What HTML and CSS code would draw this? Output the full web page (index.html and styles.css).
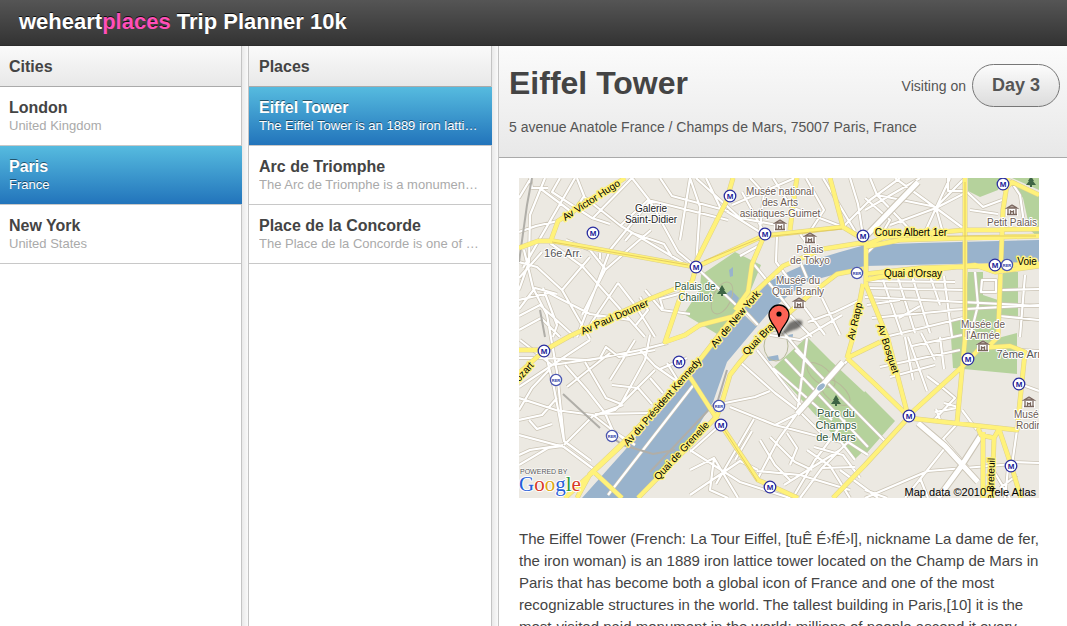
FILE: index.html
```html
<!DOCTYPE html>
<html lang="en">
<head>
<meta charset="utf-8">
<title>weheartplaces Trip Planner 10k</title>
<link rel="stylesheet" href="styles.css">
</head>
<body>
<header class="topbar"><h1 class="brand">weheart<span class="brand-accent">places</span> Trip Planner 10k</h1></header>
<main class="columns">
  <nav class="pane" aria-labelledby="cities-title">
    <h2 class="pane-title" id="cities-title">Cities</h2>
    <ul class="list">
      <li><a class="item" href="#london"><strong class="item-name">London</strong><span class="item-note">United Kingdom</span></a></li>
      <li><a class="item selected" href="#paris" aria-current="true"><strong class="item-name">Paris</strong><span class="item-note">France</span></a></li>
      <li><a class="item" href="#new-york"><strong class="item-name">New York</strong><span class="item-note">United States</span></a></li>
    </ul>
  </nav>
  <div class="splitter"></div>
  <nav class="pane pane-places" aria-labelledby="places-title">
    <h2 class="pane-title" id="places-title">Places</h2>
    <ul class="list">
      <li><a class="item selected" href="#eiffel" aria-current="true"><strong class="item-name">Eiffel Tower</strong><span class="item-note">The Eiffel Tower is an 1889 iron lattice tower located on the Champ de Mars</span></a></li>
      <li><a class="item" href="#arc"><strong class="item-name">Arc de Triomphe</strong><span class="item-note">The Arc de Triomphe is a monument in Paris</span></a></li>
      <li><a class="item" href="#concorde"><strong class="item-name">Place de la Concorde</strong><span class="item-note">The Place de la Concorde is one of the major public squares in Paris</span></a></li>
    </ul>
  </nav>
  <div class="splitter"></div>
  <article class="detail">
    <header class="detail-head">
      <div class="detail-row">
        <h2 class="detail-title">Eiffel Tower</h2>
        <div class="visit"><span>Visiting on</span><button class="day" type="button">Day 3</button></div>
      </div>
      <p class="address">5 avenue Anatole France / Champs de Mars, 75007 Paris, France</p>
    </header>
    <div class="detail-body">
      <svg class="map" viewBox="519 178 520 320" role="img" aria-label="Map around the Eiffel Tower">
        <defs>
          <filter id="soft" x="-50%" y="-50%" width="200%" height="200%"><feGaussianBlur stdDeviation="1"/></filter>
          <g id="m"><circle r="5.8" fill="#fff" stroke="#2a2ea0" stroke-width="1.3"/><text class="metro" y="3">M</text></g>
          <g id="r"><circle r="5.6" fill="#fff" stroke="#4a55b0" stroke-width="1.3"/><text class="rer" y="1.600">RER</text></g>
          <g id="museum"><path d="M-6-2 0-6 6-2V6H-6Z" fill="#fff"/><path d="M-5-2 0-5 5-2Z" fill="#b9aca4"/><path d="M-5-2 0-5 5-2ZM-4-1V4M4-1V4M-5 4.500H5M-1.500 4V1L0 2 1.500 1V4" fill="none" stroke="#79665d" stroke-width="1.3"/></g>
          <g id="tree"><path d="M0-6 3-1H2L5 3H1V5H-1V3H-5L-2-1H-3Z" fill="#3f6545"/></g>
          <path id="streets" d="M519 198 531 178M519 290 529 262 530 215 545 178M524 250 533 288 547 315 557 372 564 440M519 262 537 267 562 290 590 339M541 189 573 213M519 278 542 252M550 243 582 266 645 337M523 268 575 178M558 221 536 226 519 232M560 178 552 192 592 218 610 224M592 219 632 178M577 178 584 196 570 218M583 196 621 226 690 267M530 178 532 188 548 188M632 178 650 201 678 252 696 267M650 201 610 250 577 337M651 230 605 270 582 315M606 270 590 250 566 240M620 226 648 200 728 220M690 178 700 207 696 267M660 178 672 196 728 211M625 241 632 233 664 244 672 257M519 316 540 305 575 337M519 330 541 318 560 337M519 300 549 293 590 314 630 320M562 290 590 257M590 325 618 283M618 283 635 305 655 337M645 290 662 310 690 314M640 297 648 310 636 325M519 309 535 288 557 294M663 309 660 299 686 292M600 259 600 253M543 288 557 325 553 337M680 240 690 178M696 178 740 218 777 225M706 178 720 207 763 234M732 205 795 178M742 192 765 234M750 178 764 193 760 230M773 178 791 207 843 227M806 178 824 210 811 230M823 178 855 231M850 178 858 204 863 236M843 227 870 200 900 178M777 234 776 262 788 278M800 234 812 250M752 262 790 309M740 256 760 245M519 358 540 358 590 360 640 350 668 343M520 340 552 365 600 358 606 347 619 357 655 350M545 351 554 388 564 441 591 461M549 370 532 388 519 410M519 398 556 410 593 415 625 440M519 387 590 340M567 387 610 353M565 365 587 390 605 413M585 362 606 398 621 404M564 445 593 416 615 410 655 370M593 416 623 405M595 414 650 413M640 350 655 366 678 382M612 385 638 388 652 404M610 380 635 340M621 404 645 360 650 335M519 420 542 415 557 398M519 435 564 447 595 470M519 455 530 450 563 445M519 465 548 448 563 446M605 413 613 431 635 445M529 420 537 429 552 424M650 378 663 393M667 363 680 384M660 369 687 358M690 450 740 482 790 498M690 470 714 458 738 498M714 458 710 490 728 498M730 407 775 425 841 442 855 460M725 403 755 397 770 391M740 362 775 393 800 412 820 432M757 350 805 410M773 368 832 420M798 410 850 358M775 425 797 414 807 338M754 419 716 484M735 460 752 431M757 480 778 440 798 412M757 471 800 475 850 490M795 494 815 460 845 420M760 440 775 465 790 480M787 433 797 448 790 465M770 437 795 462 812 470M784 485 840 450M800 498 822 468 855 467M822 468 848 442 868 455M690 452 720 425M690 495 740 461 758 470M807 450 830 466 850 498M814 447 843 455 860 478M840 470 878 498M808 322 835 312 860 300M790 315 812 337M805 308 825 335M822 298 840 335M770 335 800 340 842 315M783 332 815 370M865 297 1039 306M867 288 965 290M867 281 955 282M883 280 902 335M898 278 915 333M912 276 930 333M930 276 940 305M944 276 952 337M867 305 900 300M872 318 955 310M885 337 963 318M899 318 920 306M912 346 962 335M880 367 960 350M905 337 913 380M890 377 935 365M908 337 927 391M921 333 935 360M940 337 944 369M948 310 1039 305M975 272 978 305 970 337M982 280H996V292H981ZM1002 290 1039 289M999 316 1039 320M1025 275 1020 337M943 388 955 398 932 422M943 388 927 376M944 403 958 407M935 412 957 408M936 409 940 420M957 424 943 439 970 470M977 430 962 410M865 498 928 471 1013 464M905 498 945 448M920 478 928 498M865 490 887 498M1013 462 1039 463M1008 468 1005 498M990 465 1010 498M1000 488 1017 475M1022 350 1039 351M1020 384 1039 391M1017 430 1012 465M870 178 877 195 915 235M865 198 890 220 883 232M865 210 920 178M877 195 936 207 965 178M895 178 936 208 943 233M936 208 963 228M936 208 925 232M936 208 965 193M890 225 936 208 950 178M967 192 983 207 1002 200M948 178V191H965M970 210 998 214M1010 180 1020 195 1025 230M865 255 880 240M696 267 757 325M795 350 885 441M785 359 868 447"/>
          <path id="boulevards" d="M867 235 918 182M918 423 945 446 978 482M983 432 960 468 938 498M797 414 843 362"/>
          <path id="avenues" d="M625 178 558 221 550 243M519 248 538 241 553 241 690 266M696 267 763 236 843 227 863 239M733 178 726 202 696 262M696 267 692 282 652 298 570 336 545 350 519 373M519 350 545 350M684 286 665 342 685 335 700 325 735 316 746 300M690 377 715 416 758 480 798 498M867 242 823 249 783 266 753 294 733 317 695 366 620 447 565 498M764 236 752 264 748 292 735 310M863 269 837 274 807 297 767 332 740 362 730 375 722 402 717 416 690 445 638 498M790 230 795 190 797 178M830 178 843 227M865 245 885 237 965 230 1039 229M865 247 900 240 1039 236M865 274 920 268 1039 264M865 280 900 273 975 265 995 272 1039 266M965 178 965 339 957 423M1008 178 1003 210 998 337 985 350M1003 191 1012 182 1039 195M866 237V285L888 339 896 370 908 416M863 284 853 337 847 358M847 358 880 342M847 358 876 385 908 416 964 365 980 348 1010 346 1025 352 1017 430 908 418 865 465 833 498M983 432V498M994 438 992 498M978 428 981 435 994 438 999 429 1012 468 1021 498M594 472 622 498M630 436 590 474 577 498"/>
        </defs>
        <rect x="519" y="178" width="520" height="320" fill="#ece9e2"/>
        <path fill="#b5d29c" d="M735 252 761 265 750 292 734 314 717 334 684 314 700 289 701 275ZM807 337 831 361 895 421 855 459 773 368ZM968 178H1000L998 190 980 197 968 191ZM1014 186 1039 196V238L1030 230 1023 198ZM1012 178H1039V190ZM968 272H983V295L998 300V338L1017 333V374L953 368 950 322 964 318ZM1003 272H1018V317H1001ZM865 391 895 421 865 455 848 430Z"/>
        <path fill="#99b3cc" d="M1039 240 920 243 865 245 840 252 817 259 790 271 770 281 740 311 722 335 690 370 625 450 582 498H638L690 439 713 402 727 362 748 337 770 311 790 294 807 282 847 271 865 266 1039 262ZM767 357 778 355 779 360 769 361ZM788 335 793 334 792 345 787 340ZM725 295 731 290 739 298 735 307ZM729 270 733 267 733 276 730 277Z"/>
        <g fill="none" stroke="#b7b99a"><ellipse cx="821" cy="375" rx="17" ry="8" transform="rotate(40 821 375)"/><ellipse cx="835" cy="392" rx="18" ry="9" transform="rotate(40 835 392)"/><ellipse cx="776" cy="346" rx="12" ry="15"/><ellipse cx="722" cy="298" rx="9" ry="17" transform="rotate(25 722 298)"/></g>
        <use href="#streets" class="casing"/><use href="#streets" class="street"/>
        <use href="#boulevards" class="casing wide"/><use href="#boulevards" class="street wide"/>
        <ellipse cx="821" cy="387" rx="5" ry="3" transform="rotate(-40 821 387)" fill="#99b3cc" stroke="#fff"/>
        <path d="M695 383 608 495M745 311 758 325M799 259 807 278" class="casing"/><path d="M695 383 608 495M745 311 758 325M799 259 807 278" class="street"/>
        <path d="M519 262 527 205 532 178M540 310 545 337M563 394 600 428M607 434 623 445 653 454 675 450M727 370 718 400 650 472" fill="none" stroke="#b0aea8" stroke-width="2"/>
        <use href="#avenues" class="ave-casing"/><use href="#avenues" class="avenue"/>
        <path d="M552 242 688 265M704 261 763 237 842 229M718 420 757 481M965 182V337M905 236H1036" fill="none" stroke="#d8bd55" stroke-width=".7"/>

        <use href="#m" x="593" y="233"/><use href="#m" x="730" y="196"/><use href="#m" x="765" y="234"/><use href="#m" x="696" y="267"/><use href="#m" x="863" y="236"/><use href="#m" x="1003" y="184"/><use href="#m" x="995" y="265"/><use href="#m" x="544" y="351"/><use href="#m" x="679" y="362"/><use href="#m" x="721" y="425"/><use href="#m" x="770" y="487"/><use href="#m" x="909" y="416"/><use href="#m" x="968" y="359"/><use href="#m" x="1019" y="384"/><use href="#m" x="1011" y="466"/>
        <use href="#r" x="857" y="273"/><use href="#r" x="1007" y="265"/><use href="#r" x="556" y="380"/><use href="#r" x="612" y="436"/><use href="#r" x="719" y="406"/>
        <use href="#museum" x="780" y="225"/><use href="#museum" x="810" y="238"/><use href="#museum" x="799" y="303"/><use href="#museum" x="1012" y="210"/><use href="#museum" x="983" y="346"/><use href="#museum" x="1029" y="402"/>
        <use href="#tree" x="722" y="291"/><use href="#tree" x="836" y="401"/><use href="#tree" x="1031" y="182"/>

        <g class="road-label">
          <text transform="translate(593 203) rotate(-33)">Av Victor Hugo</text>
          <text transform="translate(616 320) rotate(-24)">Av Paul Doumer</text>
          <text transform="translate(738 321) rotate(-50)">Av de New York</text>
          <text transform="translate(665 404) rotate(-49)">Av du Président Kennedy</text>
          <text transform="translate(684 453) rotate(-47)">Quai de Grenelle</text>
          <text transform="translate(765 337) rotate(-46)">Quai Branly</text>
          <text transform="translate(858 322) rotate(-77)">Av Rapp</text>
          <text transform="translate(885 350) rotate(72)">Av Bosquet</text>
          <text transform="translate(994 482) rotate(-88)">de Breteuil</text>
          <text transform="translate(524 377) rotate(-48)">Mozart</text>
          <text x="911" y="236">Cours Albert 1er</text>
          <text x="913" y="277">Quai d'Orsay</text>
          <text x="1027" y="265">Voie</text>
        </g>
        <g class="place-label">
          <text x="780" y="195">Musée national</text><text x="780" y="206">des Arts</text><text x="780" y="217">asiatiques-Guimet</text>
          <text x="810" y="253">Palais</text><text x="810" y="264">de Tokyo</text>
          <text x="798" y="284">Musée du</text><text x="798" y="295">Quai Branly</text>
          <text x="1012" y="226">Petit Palais</text>
          <text x="983" y="328">Musée de</text><text x="983" y="339">l'Armée</text>
          <text x="1029" y="418">Musée</text><text x="1029" y="429">Rodin</text>
        </g>
        <g class="place-label dark"><text x="651" y="212">Galerie</text><text x="651" y="223">Saint-Didier</text></g>
        <g class="place-label park"><text x="695" y="290">Palais de</text><text x="695" y="301">Chaillot</text></g>
        <g class="place-label park large"><text x="836" y="417">Parc du</text><text x="836" y="429">Champs</text><text x="836" y="441">de Mars</text></g>
        <g class="place-label district"><text x="563" y="257">16e Arr.</text><text x="1020" y="358">7ème Arr.</text></g>

        <path d="M779 337 789 323Q796 318 802 321 804 325 797 329 789 331 779 337" fill="#222" opacity=".6" filter="url(#soft)"/>
        <path d="M779 337C778 327 769 323 769 315A10 10 0 0 1 789 315C789 323 780 327 779 337Z" fill="#fc6355" stroke="#000" stroke-width="1.3"/><circle cx="779" cy="314" r="2.600"/>
        <text class="powered" x="520" y="474">POWERED BY</text>
        <text class="google" x="519" y="491"><tspan fill="#2860d8">G</tspan><tspan fill="#d83a28">o</tspan><tspan fill="#e0a814">o</tspan><tspan fill="#2860d8">g</tspan><tspan fill="#2a9a3c">l</tspan><tspan fill="#d83a28">e</tspan></text>
        <text class="credit" x="1036" y="496">Map data ©2010 Tele Atlas</text>
      </svg>
      <p class="description">The Eiffel Tower (French: La Tour Eiffel, [tuÊ É›fÉ›l], nickname La dame de fer, the iron woman) is an 1889 iron lattice tower located on the Champ de Mars in Paris that has become both a global icon of France and one of the most recognizable structures in the world. The tallest building in Paris,[10] it is the most-visited paid monument in the world; millions of people ascend it every year.</p>
    </div>
  </article>
</main>
</body>
</html>
```

FILE: styles.css
```css
* { box-sizing: border-box; }
body {
  margin: 0;
  height: 100vh;
  display: flex;
  flex-direction: column;
  overflow: hidden;
  background: #fff;
  color: #444;
  font: 14px/18px "Liberation Sans", Helvetica, Arial, sans-serif;
}
h1, h2, p, ul { margin: 0; padding: 0; }
.topbar {
  flex: none;
  height: 46px;
  padding: 0 19px;
  background: linear-gradient(#555, #333);
  border-bottom: 1px solid #2c2c2c;
}
.brand {
  color: #fff;
  font-size: 22px;
  line-height: 44px;
  text-shadow: 0 -1px 0 #111;
  white-space: nowrap;
}
.brand-accent { color: #ff4fb8; }
.columns { flex: 1; display: flex; min-height: 0; }
.pane { flex: none; width: 242px; border-right: 1px solid #c4c4c4; }
.pane-places { width: 243px; }
.pane-title {
  height: 41px;
  padding: 0 10px 0 9px;
  background: linear-gradient(#fafafa, #e8e8e8);
  border-bottom: 1px solid #aaa;
  font-size: 16px;
  line-height: 41px;
}
.pane-places .pane-title, .pane-places .item { padding-left: 10px; }
.list { list-style: none; }
.item {
  display: block;
  height: 59px;
  padding: 11px 11px 0 9px;
  border-bottom: 1px solid #c8c8c8;
  color: #444;
  text-decoration: none;
}
.item-name { display: block; font-size: 16px; line-height: 19px; }
.item-note {
  display: block;
  color: #aaa;
  font-size: 13px;
  line-height: 18px;
  white-space: nowrap;
  overflow: hidden;
  text-overflow: ellipsis;
}
.item.selected {
  margin-right: -1px;
  padding-right: 12px;
  color: #fff;
  background: linear-gradient(#56bbdf, #2274bb);
  text-shadow: 0 -1px 0 rgba(0, 0, 0, .5);
}
.item.selected .item-note { color: #fff; }
.splitter {
  flex: none;
  width: 7px;
  background: linear-gradient(90deg, #e9e9e9, #fafafa);
  border-right: 1px solid #c4c4c4;
}
.detail { flex: 1; min-width: 0; overflow-y: auto; scrollbar-width: none; }
.detail-head {
  padding: 18px 7px 21px 10px;
  background: linear-gradient(#fbfbfb, #e8e8e8);
  border-bottom: 1px solid #aaa;
}
.detail-row { display: flex; justify-content: space-between; align-items: flex-start; }
.detail-title { font-size: 32px; line-height: 38px; }
.visit { display: flex; align-items: center; gap: 6px; color: #555; }
.day {
  height: 43px;
  padding: 0 19px;
  border: 1px solid #777;
  border-radius: 22px;
  background: linear-gradient(#fcfcfc, #dcdcdc);
  color: #555;
  font: bold 18px "Liberation Sans", Arial, sans-serif;
}
.address { margin-top: 11px; color: #555; }
.detail-body { padding: 20px; }
.map { display: block; width: 100%; max-width: 520px; height: auto; }
.description { margin-top: 30px; font-size: 15px; line-height: 22px; }

.casing, .street, .ave-casing, .avenue { fill: none; stroke-linejoin: round; }
.casing { stroke: #cbc4b5; stroke-width: 3.6px; }
.street { stroke: #fff; stroke-width: 2.2px; }
.casing.wide { stroke-width: 7px; }
.street.wide { stroke-width: 5px; }
.ave-casing { stroke: #ddd08a; stroke-width: 5px; }
.avenue { stroke: #fff27a; stroke-width: 4px; }
.map text { font-family: "Liberation Sans", Arial, sans-serif; text-anchor: middle; paint-order: stroke; stroke-linejoin: round; }
.map .metro { font-size: 8px; font-weight: bold; fill: #1c2299; }
.map .rer { font-size: 4px; font-weight: bold; fill: #2c3aa5; }
.road-label { font-size: 10px; fill: #000; stroke: #fff27a; stroke-width: 3px; }
.place-label { font-size: 10px; fill: #6b5b54; stroke: #fff; stroke-width: 2px; }
.place-label.dark { fill: #222; }
.place-label.park { fill: #30583a; }
.place-label.large { font-size: 11px; }
.place-label.district { font-size: 11px; fill: #555; }
.map .powered { font-size: 7px; text-anchor: start; fill: #555; stroke: #fff; stroke-width: 1px; }
.map .google { font-family: "Liberation Serif", serif; font-size: 21px; text-anchor: start; stroke: #fff; stroke-width: 2px; }
.map .credit { font-size: 11px; text-anchor: end; fill: #000; }
```
